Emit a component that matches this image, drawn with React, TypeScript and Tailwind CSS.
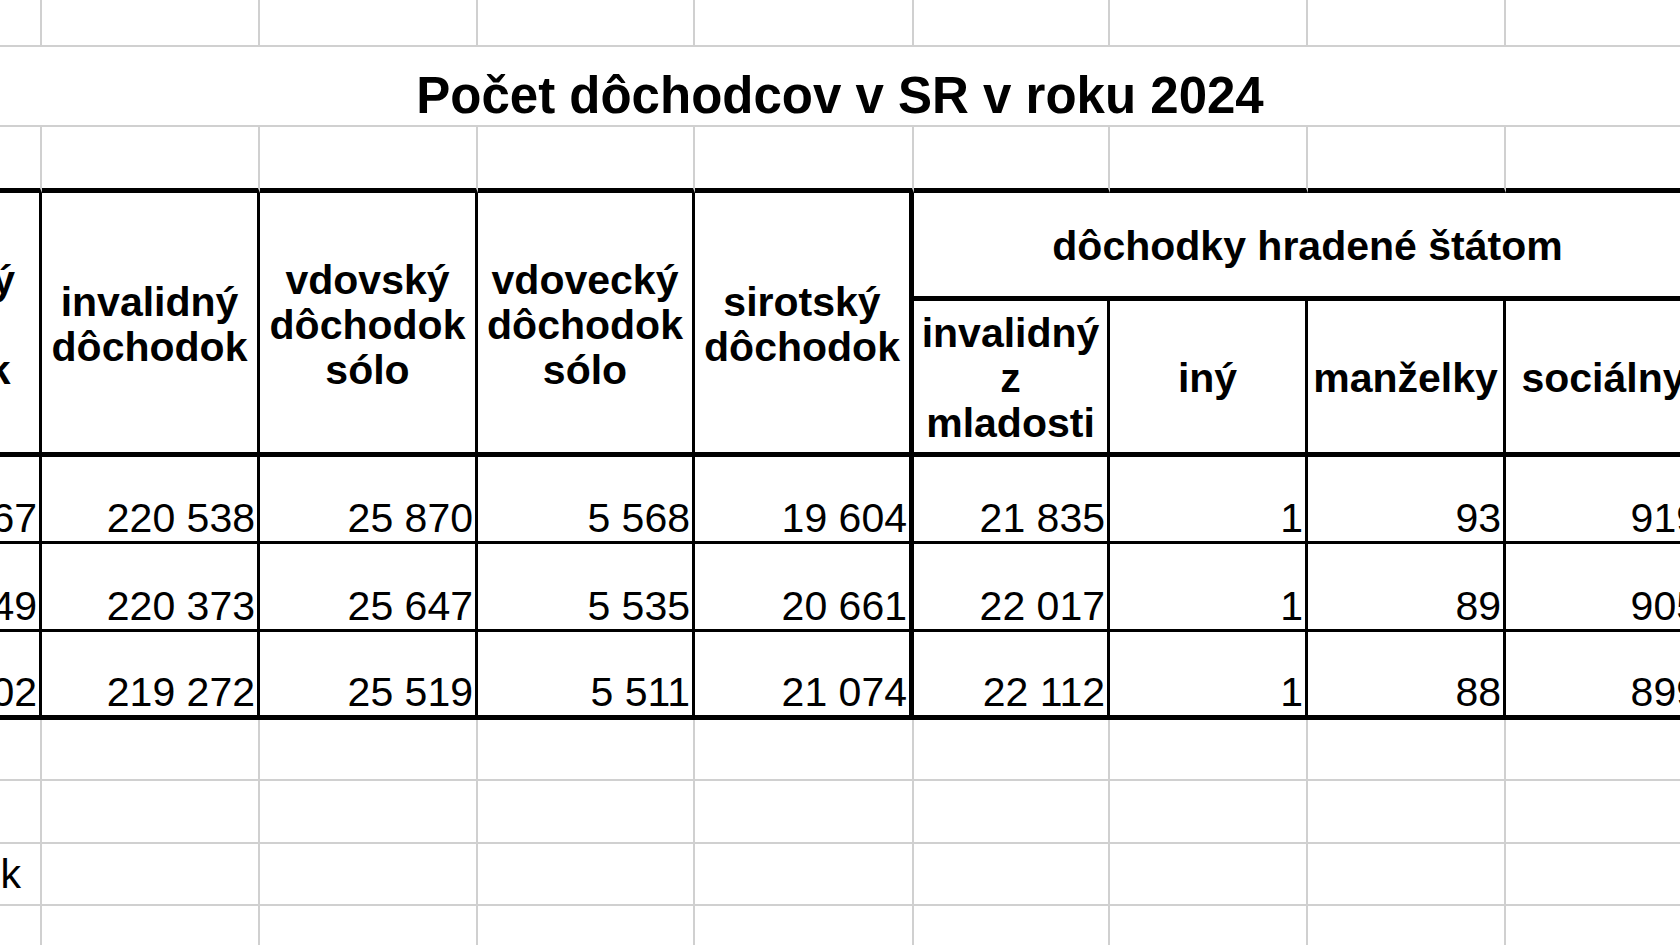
const font = "font-['Liberation_Sans',Arial,sans-serif]";

const grid = 'border-r-2 border-b-2 border-[#d0d0d0]';

const dataRows = [
  ['67', '220 538', '25 870', '5 568', '19 604', '21 835', '1', '93', '919'],
  ['49', '220 373', '25 647', '5 535', '20 661', '22 017', '1', '89', '905'],
  ['02', '219 272', '25 519', '5 511', '21 074', '22 112', '1', '88', '899'],
];

const headers = [
  'predčasný starobný dôchodok',
  'invalidný dôchodok',
  'vdovský dôchodok sólo',
  'vdovecký dôchodok sólo',
  'sirotský dôchodok',
];

const stateHeaders = ['invalidný z mladosti', 'iný', 'manželky', 'sociálny'];

function GridRow() {
  return (
    <>
      {Array.from({ length: 10 }).map((_, i) => (
        <div key={i} className={grid} />
      ))}
    </>
  );
}

export default function App() {
  return (
    <div className={`w-[1680px] h-[945px] overflow-hidden bg-white text-black ${font}`}>
      <div className="-ml-[214px] grid grid-cols-[256px_218px_218px_217px_219px_196px_198px_198px_198px_190px] grid-rows-[47px_80px_66px_108px_156px_87px_88px_88px_61px_63px_62px_62px]">
        {/* row 1 */}
        <GridRow />

        {/* title (merged) */}
        <div className="col-span-10 flex items-end justify-center border-b-2 border-[#d0d0d0] pb-[4px]">
          <span className="text-[51px] font-bold leading-[50px] whitespace-nowrap">Počet dôchodcov v SR v roku 2024</span>
        </div>

        {/* row 3, bottom is the table top border */}
        {Array.from({ length: 10 }).map((_, i) => (
          <div
            key={i}
            className={i < 9 ? 'border-r-2 border-r-[#d0d0d0] border-b-[5px] border-b-black' : grid}
          />
        ))}

        {/* header */}
        {headers.map((h, i) => (
          <div
            key={h}
            className={`row-span-2 flex items-center justify-center px-[2px] pt-[5px] text-center text-[41px] font-bold leading-[45px] border-b-[5px] border-black ${i === 4 ? 'border-r-[5px]' : 'border-r-[3px]'}`}
          >
            {h}
          </div>
        ))}
        <div className="col-span-4 flex items-center justify-center pt-[4px] text-[41px] font-bold leading-[45px] border-b-[5px] border-r-[3px] border-black">
          dôchodky hradené štátom
        </div>
        <div className={grid} />
        {stateHeaders.map((h) => (
          <div
            key={h}
            className="flex items-center justify-center px-[2px] pt-[4px] text-center text-[41px] font-bold leading-[45px] border-b-[5px] border-r-[3px] border-black"
          >
            {h}
          </div>
        ))}
        <div className={grid} />

        {/* data */}
        {dataRows.map((row, r) => (
          <>
            {row.map((v, c) => (
              <div
                key={`${r}-${c}`}
                className={`flex items-end justify-end whitespace-nowrap pr-[2px] pb-[5px] text-[41px] leading-[36px] border-black ${c === 4 ? 'border-r-[5px]' : 'border-r-[3px]'} ${r === 2 ? 'border-b-[5px]' : 'border-b-[3px]'}`}
              >
                {v}
              </div>
            ))}
            <div key={`${r}-j`} className={grid} />
          </>
        ))}

        {/* rows below the table */}
        <GridRow />
        <GridRow />
        <div className={`${grid} flex items-end justify-end whitespace-nowrap pr-[19px] pb-[12px] text-[41px] leading-[36px]`}>k</div>
        {Array.from({ length: 9 }).map((_, i) => (
          <div key={i} className={grid} />
        ))}
        <GridRow />
      </div>
    </div>
  );
}
